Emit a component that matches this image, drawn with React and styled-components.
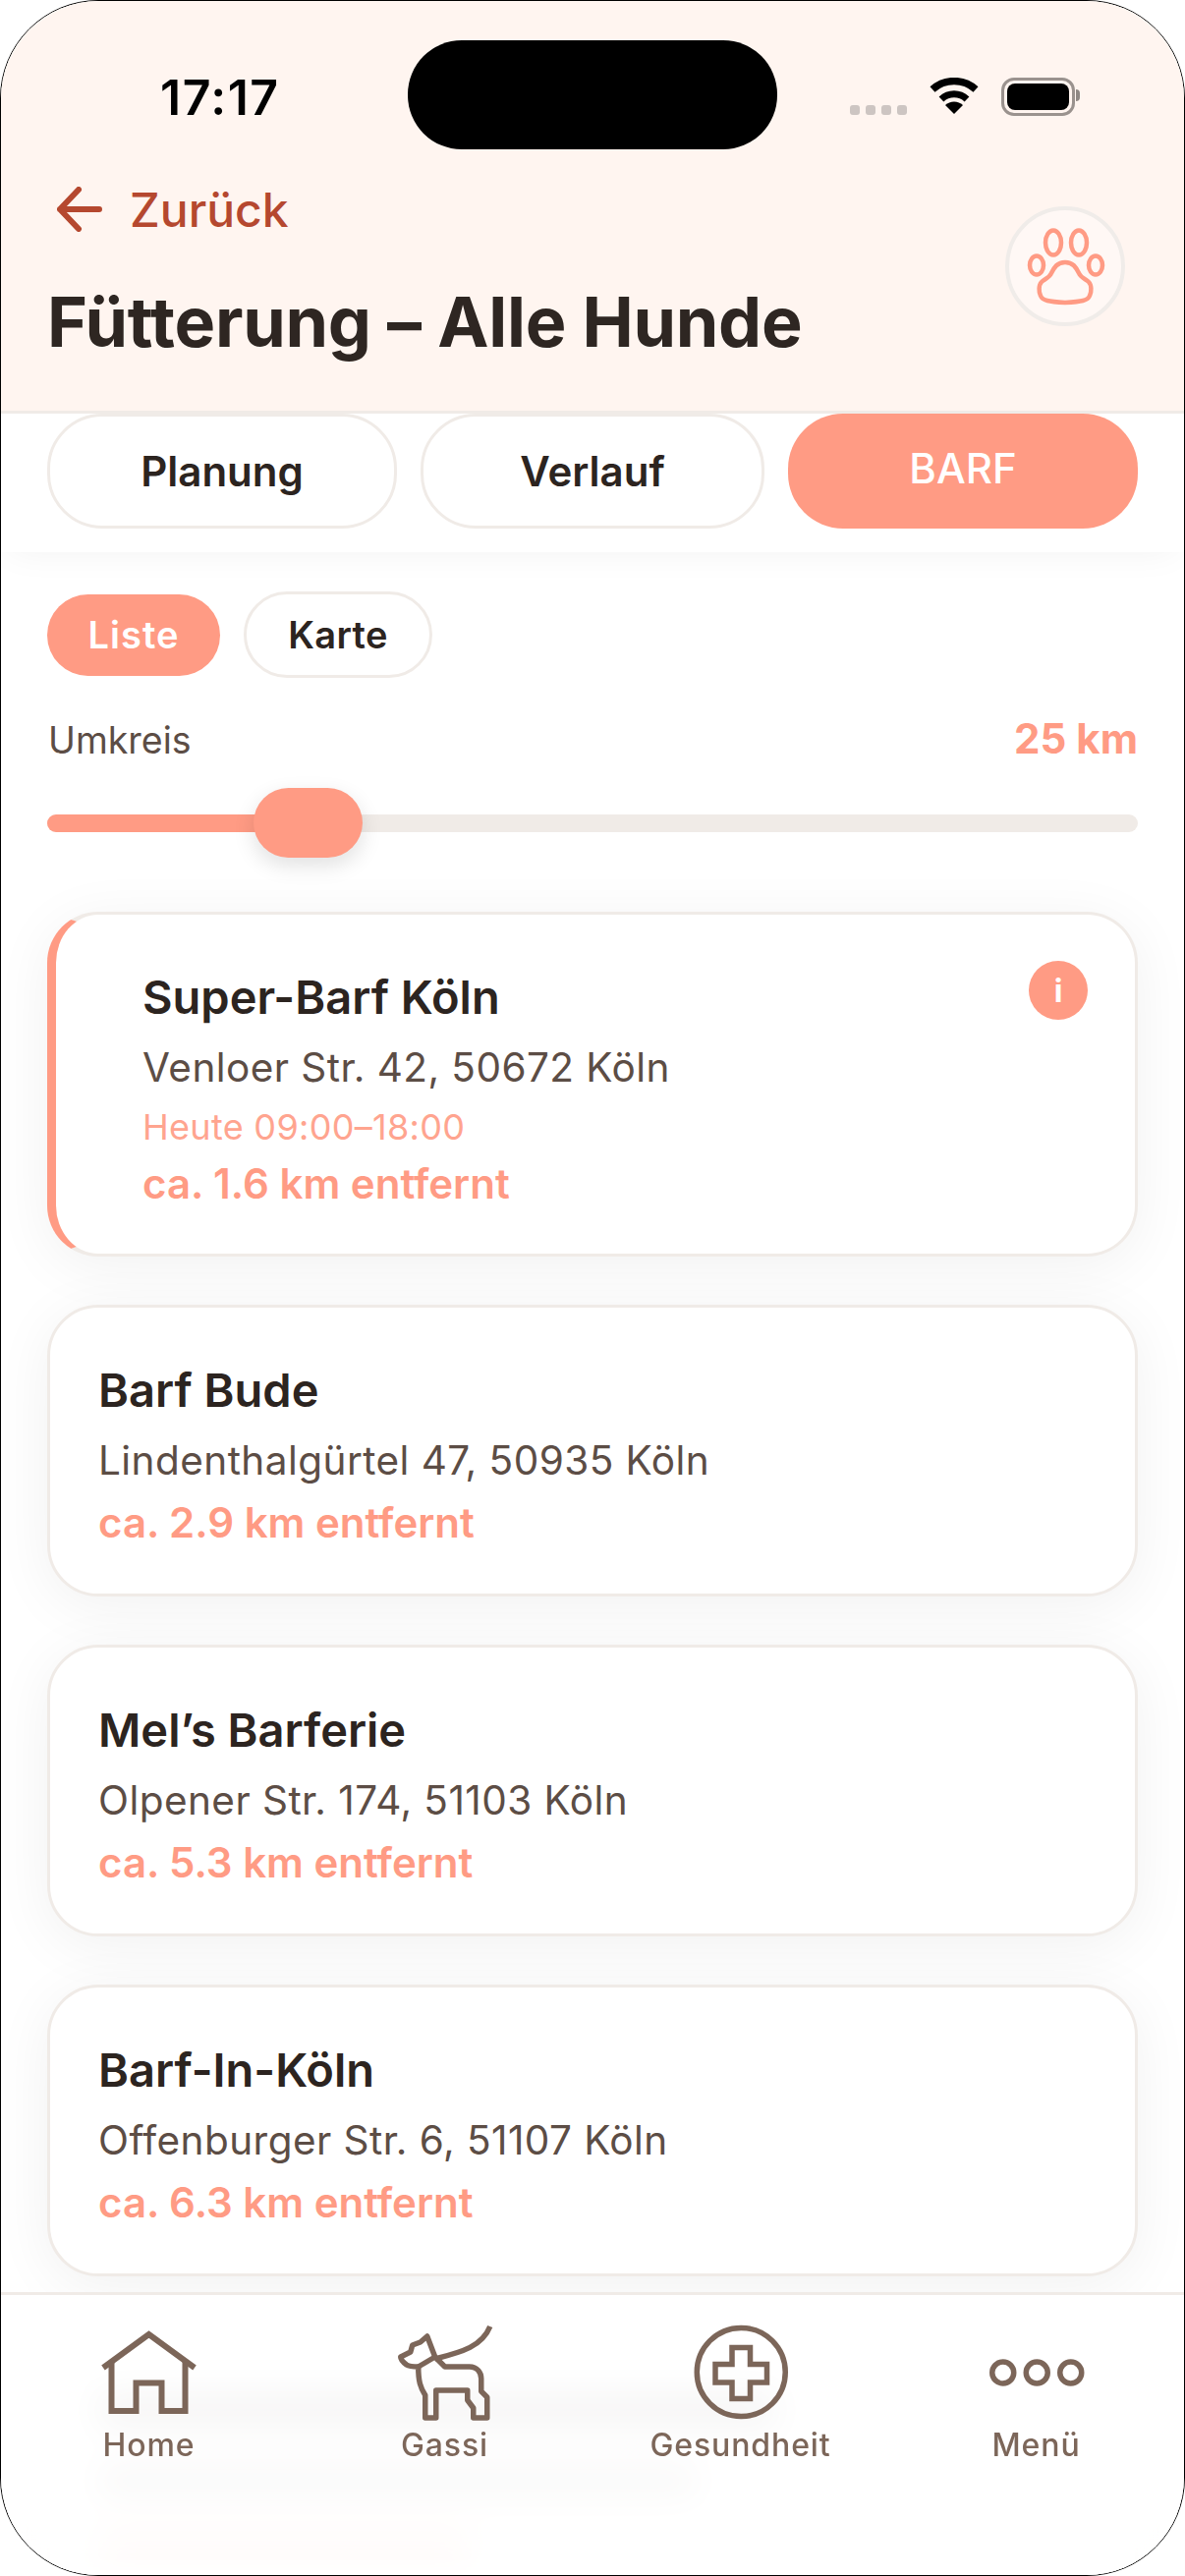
import React from 'react';
import styled, { createGlobalStyle } from 'styled-components';

const CORAL = '#ff9b84';
const LINE = '#f0ebe7';
const INK = '#2c2420';
const BROWN = '#5c4d45';
const NAV_BROWN = '#7c6659';

const GlobalStyle = createGlobalStyle`
  html, body {
    margin: 0;
    background: #fff;
  }
  * {
    box-sizing: border-box;
  }
`;

const Frame = styled.div`
  position: relative;
  width: 1206px;
  height: 2622px;
  overflow: hidden;
  border: 1px solid #000;
  border-radius: 100px;
  background: #fff;
  font-family: Inter, 'Liberation Sans', sans-serif;
  color: ${INK};
`;

const Header = styled.header`
  position: relative;
  z-index: 2;
  height: 420px;
  background: #fff5f0;
  border-bottom: 3px solid ${LINE};
`;

const StatusBar = styled.div`
  display: flex;
  align-items: flex-start;
  padding: 40px 0 0 162px;
`;

const Clock = styled.div`
  width: 252px;
  padding-top: 29px;
  font-size: 50px;
  line-height: 58px;
  font-weight: 600;
  color: #000;
  letter-spacing: 1.5px;
`;

const Island = styled.div`
  width: 376px;
  height: 111px;
  border-radius: 55px;
  background: #000;
`;

const StatusIcons = styled.div`
  display: flex;
  align-items: flex-end;
  height: 76px;
  margin-left: 74px;
`;

const Signal = styled.div`
  display: flex;
  gap: 6px;
  margin-right: 22px;
`;

const SignalDot = styled.span`
  width: 10px;
  height: 10px;
  border-radius: 3px;
  background: #cdc5c2;
`;

const Battery = styled.div`
  position: relative;
  width: 75px;
  height: 39px;
  margin: 0 0 -1px 22px;
  padding: 3px;
  border: 3px solid #9a928e;
  border-radius: 13px;

  &::before {
    content: '';
    display: block;
    height: 100%;
    border-radius: 8px;
    background: #000;
  }

  &::after {
    content: '';
    position: absolute;
    top: 9px;
    right: -8px;
    width: 4px;
    height: 12px;
    border-radius: 0 4px 4px 0;
    background: #8f8884;
  }
`;

const HeaderBody = styled.div`
  display: flex;
  justify-content: space-between;
  padding: 38px 60px 0 47px;
`;

const BackLink = styled.a`
  display: flex;
  align-items: center;
  gap: 28px;
  height: 46px;
  padding-left: 10px;
  font-size: 48px;
  font-weight: 500;
  color: #b5482f;
`;

const Title = styled.h1`
  margin: 50px 0 0;
  font-size: 70px;
  line-height: 84px;
  font-weight: 700;
  letter-spacing: -0.25px;
  color: #2e2622;
`;

const PawButton = styled.div`
  display: flex;
  align-items: center;
  justify-content: center;
  width: 122px;
  height: 122px;
  margin-top: 20px;
  border: 4px solid #f0ece9;
  border-radius: 50%;
  background: #fff8f5;
`;

const TabBar = styled.div`
  position: relative;
  display: grid;
  grid-template-columns: 356px 350px 356px;
  gap: 24px;
  padding: 0 47px 24px;
  background: #fff;
  box-shadow: 0 6px 36px -8px rgba(0, 0, 0, 0.06);
`;

const Tab = styled.div`
  display: flex;
  align-items: center;
  justify-content: center;
  height: 117px;
  border-radius: 56px;
  border: ${(p) => (p.$active ? 'none' : `3px solid ${LINE}`)};
  background: ${(p) => (p.$active ? CORAL : '#fff')};
  color: ${(p) => (p.$active ? '#fff' : INK)};
  font-size: 42px;
  font-weight: ${(p) => (p.$active ? 500 : 600)};
  padding-bottom: ${(p) => (p.$active ? '6px' : '0')};
`;

const Content = styled.main`
  padding: 40px 47px 0;
`;

const Segments = styled.div`
  display: flex;
  align-items: center;
  gap: 24px;
`;

const Segment = styled.div`
  display: flex;
  align-items: center;
  justify-content: center;
  width: ${(p) => (p.$active ? '176px' : '192px')};
  height: ${(p) => (p.$active ? '83px' : '88px')};
  border-radius: 44px;
  border: ${(p) => (p.$active ? 'none' : `3px solid ${LINE}`)};
  background: ${(p) => (p.$active ? CORAL : '#fff')};
  color: ${(p) => (p.$active ? '#fff' : INK)};
  font-size: 38px;
  font-weight: 600;
  letter-spacing: ${(p) => (p.$active ? '1px' : '0.3px')};
`;

const RadiusRow = styled.div`
  display: flex;
  justify-content: space-between;
  align-items: baseline;
  margin-top: 40px;
  padding-left: 1px;
`;

const RadiusLabel = styled.span`
  font-size: 37.5px;
  line-height: 44px;
  color: ${BROWN};
`;

const RadiusValue = styled.span`
  font-size: 42px;
  line-height: 44px;
  font-weight: 700;
  color: ${CORAL};
`;

const Slider = styled.div`
  position: relative;
  height: 18px;
  margin-top: 53px;
  border-radius: 9px;
  background: ${LINE};
`;

const SliderFill = styled.div`
  height: 100%;
  border-radius: 9px 0 0 9px;
  background: ${CORAL};
`;

const SliderThumb = styled.div`
  position: absolute;
  top: -27px;
  width: 111px;
  height: 71px;
  border-radius: 36px;
  background: ${CORAL};
  box-shadow: 0 8px 22px rgba(0, 0, 0, 0.12);
`;

const CardList = styled.div`
  display: flex;
  flex-direction: column;
  gap: 49px;
  margin-top: 81px;
`;

const Card = styled.article`
  position: relative;
  padding: ${(p) => (p.$featured ? '57px 60px 47px 88px' : '57px 60px 48px 49px')};
  border: 3px solid ${LINE};
  border-left: ${(p) => (p.$featured ? `9px solid ${CORAL}` : `3px solid ${LINE}`)};
  border-radius: 52px;
  background: #fff;
  box-shadow: 0 10px 60px rgba(0, 0, 0, 0.06);
`;

const Name = styled.h2`
  margin: 0;
  font-size: 47px;
  line-height: 54px;
  font-weight: 600;
  color: ${INK};
`;

const Address = styled.p`
  margin: 21px 0 0;
  font-size: 40.5px;
  line-height: 48px;
  letter-spacing: 0.45px;
  color: ${BROWN};
`;

const Hours = styled.p`
  margin: 14px 0 -3px;
  font-size: 36px;
  line-height: 44px;
  letter-spacing: 0.3px;
  color: #ffa48f;
`;

const Distance = styled.p`
  margin: 15px 0 0;
  font-size: 42px;
  line-height: 48px;
  font-weight: 600;
  color: ${CORAL};
`;

const InfoBadge = styled.div`
  position: absolute;
  top: 47px;
  right: 48px;
  display: flex;
  align-items: center;
  justify-content: center;
  width: 60px;
  height: 60px;
  border-radius: 50%;
  background: ${CORAL};
  color: #fff;
  font-size: 32px;
  font-weight: 700;
`;

const SkeletonLine = styled.div`
  height: ${(p) => p.$height}px;
  margin-top: ${(p) => p.$gap}px;
  border-radius: 6px;
  background: ${(p) => p.$color};
`;

const BottomNav = styled.nav`
  position: absolute;
  left: 0;
  right: 0;
  bottom: 0;
  z-index: 3;
  display: grid;
  grid-template-columns: repeat(4, 1fr);
  height: 288px;
  padding-top: 30px;
  border-top: 3px solid ${LINE};
  background: rgba(255, 255, 255, 0.88);
  backdrop-filter: blur(18px);
`;

const NavItem = styled.div`
  display: flex;
  flex-direction: column;
  align-items: center;
  color: ${NAV_BROWN};
`;

const NavLabel = styled.span`
  margin-top: 4px;
  font-size: 32px;
  line-height: 38px;
  font-weight: 450;
  letter-spacing: 0.9px;
`;

const Wifi = () => (
  <svg width="52" height="38" viewBox="0 0 52 38" fill="none" stroke="#000">
    <path d="M4 12A33 33 0 0 1 48 12" strokeWidth="7.5" />
    <path d="M13 22A19 19 0 0 1 39 22" strokeWidth="7" />
    <path d="M26 37L17 28A13 13 0 0 1 35 28Z" fill="#000" stroke="none" />
  </svg>
);

const BackArrow = () => (
  <svg width="46" height="46" viewBox="0 0 46 46" fill="none" stroke="#b5482f" strokeWidth="6" strokeLinecap="round" strokeLinejoin="round">
    <path d="M43 23H3M22 3L3 23L22 43" />
  </svg>
);

const PawIcon = () => (
  <svg width="122" height="122" viewBox="0 0 122 122" fill="none" stroke={CORAL} strokeWidth="4.5" style={{ margin: -4 }}>
    <ellipse cx="49" cy="37" rx="8" ry="12.5" />
    <ellipse cx="75" cy="37" rx="8" ry="12.5" />
    <ellipse cx="32" cy="60" rx="7" ry="9.5" />
    <ellipse cx="92" cy="60" rx="7" ry="9.5" />
    <path d="M61 57C53 57 50 62 47 68C45 73 40 74 37 77C34 80 34 87 36 91C38 96 44 97 61 98C78 97 84 96 86 91C88 87 88 80 85 77C82 74 77 73 75 68C72 62 69 57 61 57Z" />
  </svg>
);

const HomeIcon = () => (
  <svg width="100" height="100" viewBox="0 0 100 100" fill="none" stroke={NAV_BROWN} strokeWidth="6">
    <path d="M3 44L49.5 10L96 44" />
    <path d="M11.5 38V88H36.5V59.5H62.5V88H86.5V38" />
  </svg>
);

const DogIcon = () => (
  <svg width="100" height="100" viewBox="0 0 100 100" fill="none" stroke={NAV_BROWN} strokeWidth="5.5" strokeLinejoin="round">
    <g transform="translate(1.75 0)">
      <path d="M94 2C86 22 66 28 38 35" />
      <path d="M30 12L38 33L48 43H73C81 43 85 49 85 55V68L91 74V95H77V85L71 77V67H39V95H28V72C23 64 21 58 21 43C16 43 12 43 9 41C5 38 3 36 3 33L13 28L15 21L23 18Z" />
      <path d="M21 43L38 33" />
    </g>
  </svg>
);

const HealthIcon = () => (
  <svg width="100" height="100" viewBox="0 0 100 100" fill="none" stroke={NAV_BROWN} strokeWidth="5.5">
    <circle cx="50.25" cy="48.5" r="45" />
    <path d="M41 23.5H59.5V40.5H76.5V59H59.5V75.5H41V59H24V40.5H41Z" />
  </svg>
);

const DotsIcon = () => (
  <svg width="100" height="100" viewBox="0 0 100 100" fill="none" stroke={NAV_BROWN} strokeWidth="5.5">
    <circle cx="15.75" cy="49" r="11" />
    <circle cx="50.25" cy="49" r="11" />
    <circle cx="84.75" cy="49" r="11" />
  </svg>
);

const shops = [
  {
    name: 'Super-Barf Köln',
    address: 'Venloer Str. 42, 50672 Köln',
    hours: 'Heute 09:00–18:00',
    distance: 'ca. 1.6 km entfernt',
    featured: true,
  },
  {
    name: 'Barf Bude',
    address: 'Lindenthalgürtel 47, 50935 Köln',
    distance: 'ca. 2.9 km entfernt',
  },
  {
    name: 'Mel’s Barferie',
    address: 'Olpener Str. 174, 51103 Köln',
    distance: 'ca. 5.3 km entfernt',
  },
  {
    name: 'Barf-In-Köln',
    address: 'Offenburger Str. 6, 51107 Köln',
    distance: 'ca. 6.3 km entfernt',
  },
];

const navItems = [
  { label: 'Home', Icon: HomeIcon },
  { label: 'Gassi', Icon: DogIcon },
  { label: 'Gesundheit', Icon: HealthIcon },
  { label: 'Menü', Icon: DotsIcon },
];

export default function App() {
  const thumbLeft = 210;

  return (
    <>
      <GlobalStyle />
      <Frame>
        <Header>
          <StatusBar>
            <Clock>17:17</Clock>
            <Island />
            <StatusIcons>
              <Signal>
                <SignalDot />
                <SignalDot />
                <SignalDot />
                <SignalDot />
              </Signal>
              <Wifi />
              <Battery />
            </StatusIcons>
          </StatusBar>
          <HeaderBody>
            <div>
              <BackLink>
                <BackArrow />
                Zurück
              </BackLink>
              <Title>Fütterung – Alle Hunde</Title>
            </div>
            <PawButton>
              <PawIcon />
            </PawButton>
          </HeaderBody>
        </Header>

        <TabBar>
          <Tab>Planung</Tab>
          <Tab>Verlauf</Tab>
          <Tab $active>BARF</Tab>
        </TabBar>

        <Content>
          <Segments>
            <Segment $active>Liste</Segment>
            <Segment>Karte</Segment>
          </Segments>

          <RadiusRow>
            <RadiusLabel>Umkreis</RadiusLabel>
            <RadiusValue>25 km</RadiusValue>
          </RadiusRow>

          <Slider>
            <SliderFill style={{ width: thumbLeft + 20 }} />
            <SliderThumb style={{ left: thumbLeft }} />
          </Slider>

          <CardList>
            {shops.map((shop) => (
              <Card key={shop.name} $featured={shop.featured}>
                <Name>{shop.name}</Name>
                <Address>{shop.address}</Address>
                {shop.hours && <Hours>{shop.hours}</Hours>}
                <Distance>{shop.distance}</Distance>
                {shop.featured && <InfoBadge>i</InfoBadge>}
              </Card>
            ))}
            <Card>
              <SkeletonLine $height={34} $gap={10} $color="rgba(44, 36, 32, 0.4)" style={{ width: 690 }} />
              <SkeletonLine $height={30} $gap={40} $color="rgba(92, 77, 69, 0.35)" style={{ width: 610 }} />
              <SkeletonLine $height={30} $gap={36} $color="rgba(255, 155, 132, 0.4)" style={{ width: 380 }} />
            </Card>
          </CardList>
        </Content>

        <BottomNav>
          {navItems.map(({ label, Icon }) => (
            <NavItem key={label}>
              <Icon />
              <NavLabel>{label}</NavLabel>
            </NavItem>
          ))}
        </BottomNav>
      </Frame>
    </>
  );
}
